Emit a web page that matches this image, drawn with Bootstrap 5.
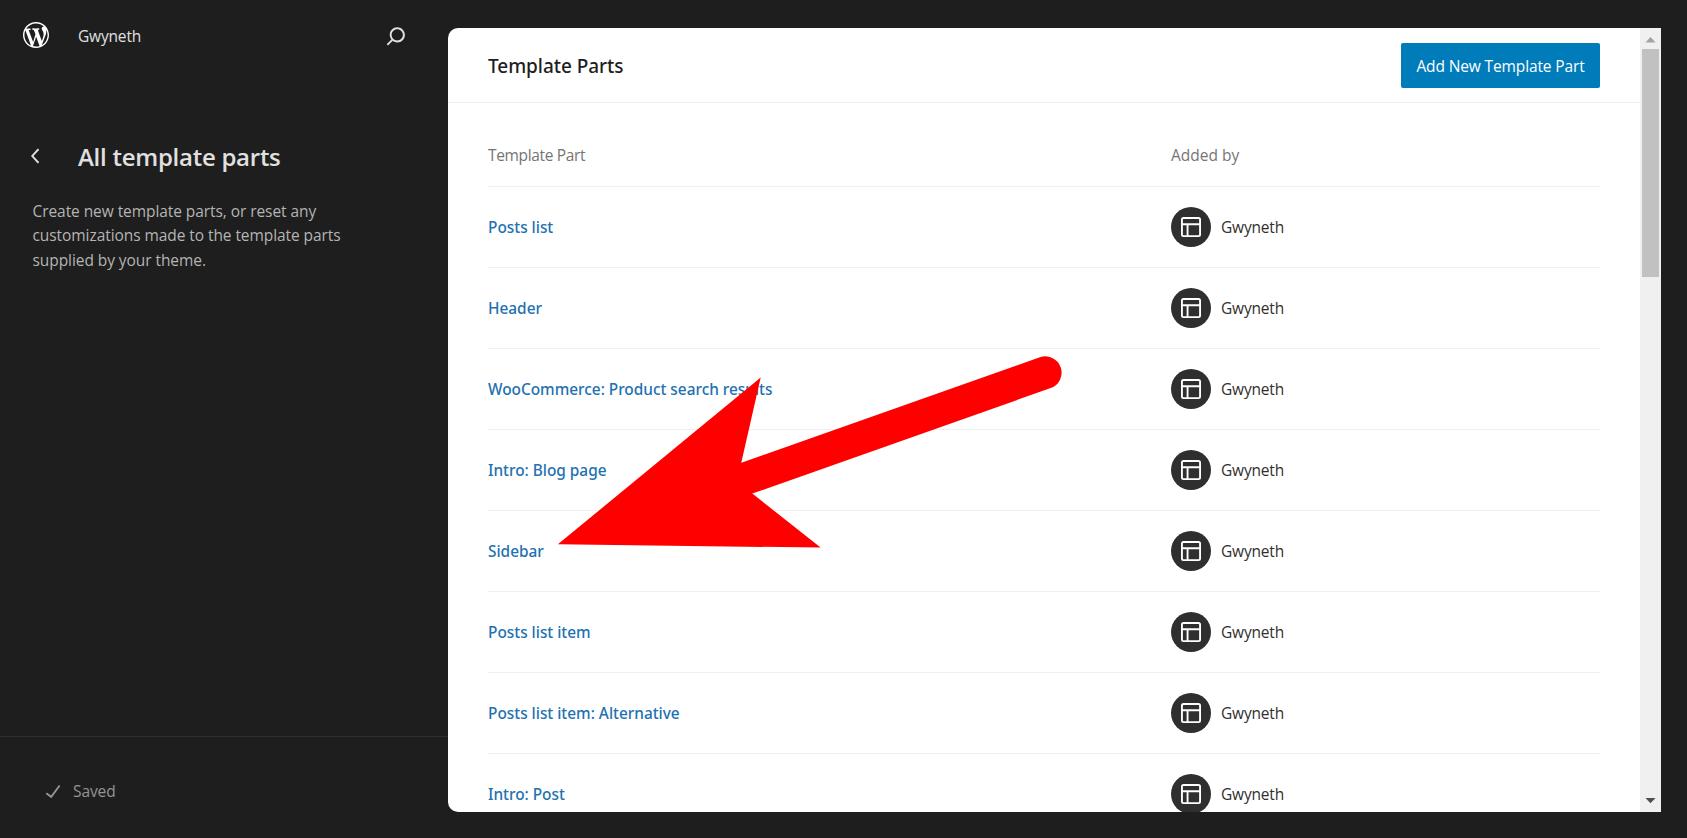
<!DOCTYPE html>
<html lang="en">
<head>
<meta charset="utf-8">
<meta name="viewport" content="width=device-width, initial-scale=1">
<title>Template Parts</title>
<link href="https://cdn.jsdelivr.net/npm/bootstrap@5.3.0/dist/css/bootstrap.min.css" rel="stylesheet">
<style>
body{background:#1e1e1e;color:#2f2f2f;font-family:"Open Sans","Noto Sans",sans-serif;font-size:15.5px;line-height:24px}
svg{display:block;fill:currentColor;flex:none}
.side{width:448px;color:#e0e0e0}
.side-top{height:72px;padding:0 37px 0 20px}
.side-top .site{margin-left:26px;letter-spacing:-.17px}
.side-title{height:50px;padding-left:21px;margin-top:59px}
.side-title h1{font-size:24px;font-weight:600;line-height:32px;letter-spacing:-.26px;margin-left:27px;padding-top:2px}
.side-desc{color:#b4b4b4;line-height:24.4px;letter-spacing:-.07px;padding-left:32.5px;margin-top:18px}
.side-foot{height:102px;border-top:1px solid #2f2f2f;color:#949494;padding:7px 0 0 38px}
.side-foot span{margin-left:5px;letter-spacing:-.1px}
.frame{margin:28px 26px 26px 0;border-radius:10px 0 0 10px}
.frame-head{height:75px;padding:0 40px;border-bottom:1px solid #f0f0f0}
.frame-head h2{font-family:"Noto Sans",sans-serif;font-size:19px;font-weight:500;letter-spacing:-.05px;color:#1e1e1e;padding-top:2px}
.btn-add{width:199px;height:45px;background:#007cba;color:#fff;border:0;border-radius:2px;font-size:15.5px;letter-spacing:-.13px;padding:3px 0 0}
.btn-add:hover{background:#006ba1;color:#fff}
.parts{padding:0 40px}
.line{height:81px;flex:none;border-bottom:1px solid #f0f0f0}
.line.heads{height:84px;color:#757575;padding-top:21px}
.line a{color:#2271b1;font-family:"Noto Sans",sans-serif;font-weight:500;font-size:15.4px;letter-spacing:-.01px}
.name-col{width:683px}
.heads .name-col{letter-spacing:-.35px}
.avatar{width:40px;height:40px;background:#2f2f2f;color:#fff;margin-right:10px}
.who{letter-spacing:-.18px}
.track{width:21px;background:#f0f0f0;flex:none}
.track .thumb{width:17px;height:228px;background:#c1c1c1}
.arrow{left:550px;top:350px;pointer-events:none}
</style>
</head>
<body class="vh-100 overflow-hidden d-flex position-relative">

<aside class="side d-flex flex-column flex-shrink-0">
  <div class="side-top d-flex align-items-center">
    <svg width="32" height="32" viewBox="-2.3 -1.5 24.6 24.6" class="text-white"><path d="M20 10c0-5.51-4.49-10-10-10C4.48 0 0 4.49 0 10c0 5.52 4.48 10 10 10 5.51 0 10-4.48 10-10zM7.78 15.37L4.37 6.22c.55-.02 1.17-.08 1.17-.08.5-.06.44-1.13-.06-1.11 0 0-1.45.11-2.37.11-.18 0-.37 0-.58-.01C4.12 2.69 6.87 1.11 10 1.11c2.33 0 4.45.87 6.05 2.34-.68-.11-1.65.39-1.65 1.58 0 .74.45 1.36.9 2.1.35.61.55 1.36.55 2.46 0 1.49-1.4 5-1.4 5l-3.03-8.37c.54-.02.82-.17.82-.17.5-.05.44-1.25-.06-1.22 0 0-1.44.12-2.38.12-.87 0-2.33-.12-2.33-.12-.5-.03-.56 1.2-.06 1.22l.92.08 1.26 3.41zM17.41 10c.24-.64.74-1.87.43-4.25.7 1.29 1.05 2.71 1.05 4.25 0 3.29-1.73 6.24-4.4 7.78.97-2.59 1.94-5.2 2.92-7.78zM6.1 18.09C3.12 16.65 1.11 13.53 1.11 10c0-1.3.23-2.48.72-3.59C3.25 10.3 4.67 14.2 6.1 18.09zm4.03-6.63l2.58 6.98c-.86.29-1.76.45-2.71.45-.79 0-1.57-.11-2.29-.33.81-2.38 1.62-4.74 2.42-7.1z"/></svg>
    <span class="site">Gwyneth</span>
    <svg class="ms-auto" width="30" height="30" viewBox="0 0 24 24"><path d="M13 5c-3.3 0-6 2.7-6 6 0 1.4.5 2.7 1.3 3.7l-3.8 3.8 1.1 1.1 3.8-3.8c1 .8 2.3 1.3 3.7 1.3 3.3 0 6-2.7 6-6S16.3 5 13 5zm0 10.5c-2.5 0-4.5-2-4.5-4.5s2-4.5 4.5-4.5 4.5 2 4.5 4.5-2 4.5-4.5 4.5z"/></svg>
  </div>
  <div class="side-title d-flex align-items-center">
    <svg width="30" height="30" viewBox="0 0 24 24"><path d="M14.6 7l-1.2-1L8 12l5.4 6 1.2-1-4.6-5z"/></svg>
    <h1 class="mb-0">All template parts</h1>
  </div>
  <p class="side-desc mb-0">Create new template parts, or reset any<br>customizations made to the template parts<br>supplied by your theme.</p>
  <div class="side-foot d-flex align-items-center mt-auto">
    <svg width="30" height="30" viewBox="0 0 24 24"><path d="M16.7 7.1l-6.3 8.5-3.3-2.5-.9 1.2 4.5 3.4L17.9 8z"/></svg>
    <span>Saved</span>
  </div>
</aside>

<main class="frame flex-grow-1 d-flex bg-white overflow-hidden">
  <div class="flex-grow-1 overflow-hidden">
    <header class="frame-head d-flex align-items-center justify-content-between">
      <h2 class="mb-0">Template Parts</h2>
      <button class="btn btn-add" type="button">Add New Template Part</button>
    </header>
    <div class="parts" id="parts">
      <div class="line heads d-flex align-items-center">
        <div class="name-col">Template Part</div>
        <div>Added by</div>
      </div>
    </div>
  </div>
  <div class="track d-flex flex-column align-items-center">
    <svg width="21" height="21" viewBox="0 0 21 21"><path d="M5.5 14.5h10L10.500 9z" fill="#a3a3a3"/></svg>
    <div class="thumb"></div>
    <svg class="mt-auto" width="21" height="22" viewBox="0 0 21 22"><path d="M5.5 8h10l-5 5.300z" fill="#505050"/></svg>
  </div>
</main>

<svg class="arrow position-absolute" width="520" height="215" viewBox="550 350 520 215">
  <path d="M1045.3 372.700 744 479.200" stroke="#f00" stroke-width="32.600" stroke-linecap="round"/>
  <path d="M557.900 544.300 760.700 377.400 741.200 463 752 493.300 820.600 547.600z" fill="#f00"/>
</svg>

<script>
const names = ["Posts list", "Header", "WooCommerce: Product search results", "Intro: Blog page", "Sidebar", "Posts list item", "Posts list item: Alternative", "Intro: Post"];
document.getElementById("parts").insertAdjacentHTML("beforeend", names.map(n => `
  <div class="line d-flex align-items-center">
    <div class="name-col"><a href="#" class="text-decoration-none">${n}</a></div>
    <div class="avatar rounded-circle d-flex align-items-center justify-content-center"><svg width="30" height="30" viewBox="0 0 24 24"><path d="M18 5.5H6a.5.5 0 00-.5.5v3h13V6a.5.5 0 00-.5-.5zm.5 5H10v8h8a.5.5 0 00.5-.5v-7.5zm-10 0h-3V18a.5.5 0 00.5.5h2.500v-8zM6 4h12a2 2 0 012 2v12a2 2 0 01-2 2H6a2 2 0 01-2-2V6a2 2 0 012-2z"/></svg></div>
    <div class="who">Gwyneth</div>
  </div>`).join(""));
</script>
<script src="https://cdn.jsdelivr.net/npm/bootstrap@5.3.0/dist/js/bootstrap.bundle.min.js"></script>
</body>
</html>
